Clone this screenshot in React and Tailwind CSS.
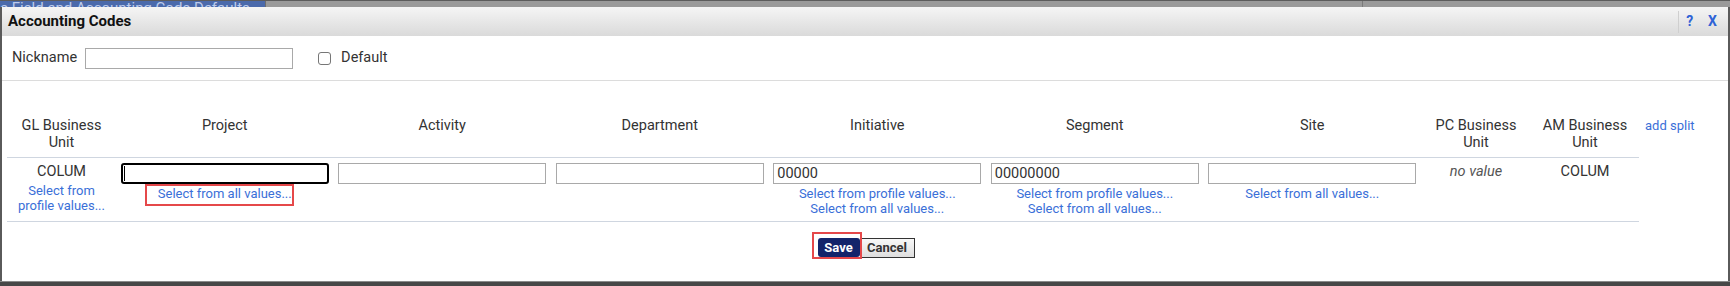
import React from 'react';

const GRID = 'grid grid-cols-[109px_repeat(6,217.5px)_110px_108px]';

function Link({ children }) {
  return <div className="text-[13px] leading-[15px] text-[#3a6fd8] whitespace-nowrap">{children}</div>;
}

function TextInput({ value = '' }) {
  return (
    <div className="mx-auto w-[208px] h-[21px] border border-[#a9a9a9] bg-white px-[3px] text-left text-[14.5px] leading-[19px] text-[#333]">
      {value}
    </div>
  );
}

export default function App() {
  return (
    <div className="w-[1730px] h-[286px] overflow-hidden flex flex-col bg-[#9a9a9a] font-['Roboto','Liberation_Sans',sans-serif]">
      {/* page behind the dialog, mostly hidden */}
      <div className="h-[7px] shrink-0 flex border-t border-[#5c5c5c] overflow-hidden">
        <div className="w-[265px] bg-[#4b6aab] overflow-hidden">
          <div className="-mt-[2px] text-[15px] leading-[18px] text-[#bccbec] whitespace-nowrap">
            e Field and Accounting Code Defaults
          </div>
        </div>
        <div className="w-px bg-[#6e6e6e]" />
        <div className="flex-1" />
        <div className="w-px bg-[#7a7a7a] mr-[367px]" />
      </div>

      {/* dialog */}
      <div className="flex-1 flex flex-col bg-white border-l-2 border-r-2 border-[#5a5a5a]">
        <div className="h-[29px] flex items-center bg-gradient-to-b from-[#f5f5f5] to-[#dadada] pl-[6px]">
          <span className="text-[15px] font-bold text-[#111]">Accounting Codes</span>
          <div className="ml-auto flex items-center h-full">
            <div className="w-px h-[22px] bg-[#cfcfcf] mr-[7px]" />
            <span className="text-[14px] font-bold text-[#2f62d6]">?</span>
            <span className="ml-[15px] mr-[11px] text-[14px] font-bold text-[#2f62d6]">X</span>
          </div>
        </div>

        <div className="h-[45px] flex items-center border-b border-[#dcdcdc] pl-[10px] text-[14.5px] text-[#333]">
          <span>Nickname</span>
          <div className="ml-[8px] w-[208px] h-[21px] border border-[#a9a9a9]" />
          <div className="ml-[25px] w-[13px] h-[13px] rounded-[3px] border border-[#767676] bg-white" />
          <span className="ml-[10px]">Default</span>
        </div>

        <div className="flex pl-[5px]">
          <div className="w-[1632px]">
            <div className={`${GRID} pt-[36px] pb-[6px] border-b border-[#cfd6e0] text-center text-[14.5px] leading-[17px] text-[#333]`}>
              <div>GL Business<br />Unit</div>
              <div>Project</div>
              <div>Activity</div>
              <div>Department</div>
              <div>Initiative</div>
              <div>Segment</div>
              <div>Site</div>
              <div>PC Business<br />Unit</div>
              <div>AM Business<br />Unit</div>
            </div>

            <div className={`${GRID} pt-[5px] pb-[5px] border-b border-[#cfd6e0] text-center`}>
              <div>
                <div className="text-[14.5px] leading-[18px] text-[#333]">COLUM</div>
                <div className="mt-[2px] text-[13px] leading-[15px] text-[#3a6fd8]">Select from<br />profile values...</div>
              </div>
              <div>
                <div className="relative mx-auto w-[208px] h-[21px] border-2 border-black rounded-[3px] bg-white">
                  <div className="absolute left-[1px] top-[1px] w-px h-[15px] bg-black" />
                </div>
                <div className="mt-[2px] flex justify-center">
                  <div className="relative">
                    <Link>Select from all values...</Link>
                    <div className="absolute -left-[13px] -right-[2px] -top-[2px] -bottom-[5px] border-2 border-[#e5484a]" />
                  </div>
                </div>
              </div>
              <div><TextInput /></div>
              <div><TextInput /></div>
              <div>
                <TextInput value="00000" />
                <div className="mt-[2px]">
                  <Link>Select from profile values...</Link>
                  <Link>Select from all values...</Link>
                </div>
              </div>
              <div>
                <TextInput value="00000000" />
                <div className="mt-[2px]">
                  <Link>Select from profile values...</Link>
                  <Link>Select from all values...</Link>
                </div>
              </div>
              <div>
                <TextInput />
                <div className="mt-[2px]">
                  <Link>Select from all values...</Link>
                </div>
              </div>
              <div className="text-[14.5px] leading-[18px] italic text-[#555]">no value</div>
              <div className="text-[14.5px] leading-[18px] text-[#333]">COLUM</div>
            </div>
          </div>
          <div className="ml-[6px] pt-[36px] text-[13px] leading-[17px] text-[#3a6fd8]">add split</div>
        </div>

        <div className="pt-[16px] flex justify-center items-start pl-[2px]">
          <div className="relative flex">
            <button className="block w-[42px] h-[19px] rounded-[3px] bg-[#13246b] text-white text-[13px] font-bold leading-[19px]">Save</button>
            <div className="absolute -left-[6px] -top-[6px] w-[50px] h-[27px] border-2 border-[#e5484a]" />
          </div>
          <button className="block w-[55px] h-[20px] border border-[#333] bg-gradient-to-b from-[#f8f8f8] to-[#dedede] text-[#333] text-[13px] font-bold leading-[18px]">Cancel</button>
        </div>
      </div>

      <div className="h-[5px] shrink-0 bg-[#474747] border-t border-[#8a8a8a]" />
    </div>
  );
}
